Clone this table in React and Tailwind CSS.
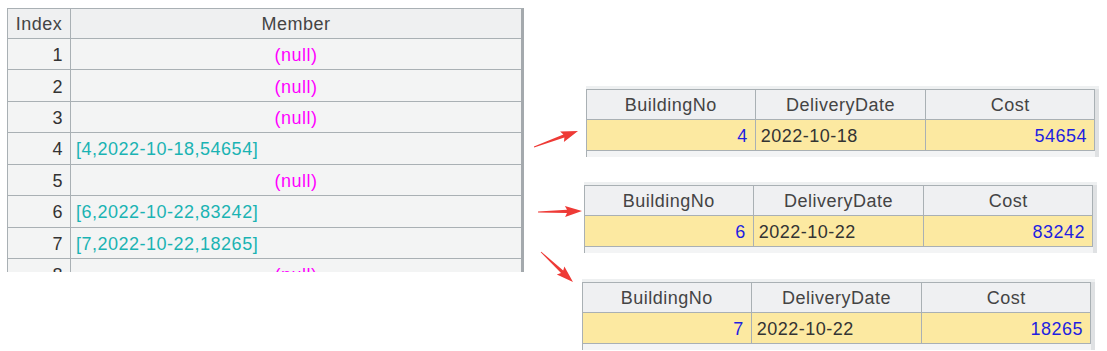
import React from "react";

const FONT = { fontFamily: '"Liberation Sans", Arial, sans-serif' };

const leftRows = [
  { i: 1, v: null },
  { i: 2, v: null },
  { i: 3, v: null },
  { i: 4, v: "[4,2022-10-18,54654]" },
  { i: 5, v: null },
  { i: 6, v: "[6,2022-10-22,83242]" },
  { i: 7, v: "[7,2022-10-22,18265]" },
  { i: 8, v: null },
];

const records = [
  { no: 4, date: "2022-10-18", cost: 54654, ml: "ml-[62px]", mt: "mt-[86px]" },
  { no: 6, date: "2022-10-22", cost: 83242, ml: "ml-[60px]", mt: "mt-[25px]" },
  { no: 7, date: "2022-10-22", cost: 18265, ml: "ml-[58px]", mt: "mt-[26px]" },
];

// tapered arrow polygon from tail to tip
function arrowPoints(tx, ty, hx, hy) {
  const dx = hx - tx;
  const dy = hy - ty;
  const len = Math.hypot(dx, dy);
  const ux = dx / len;
  const uy = dy / len;
  const nx = -uy;
  const ny = ux;
  const head = 15;
  const nkx = hx - ux * head;
  const nky = hy - uy * head;
  const bx = hx - ux * (head + 2);
  const by = hy - uy * (head + 2);
  const p = (x, y) => `${x.toFixed(1)},${y.toFixed(1)}`;
  return [
    p(tx + nx * 0.4, ty + ny * 0.4),
    p(nkx + nx * 1.6, nky + ny * 1.6),
    p(bx + nx * 5.5, by + ny * 5.5),
    p(hx, hy),
    p(bx - nx * 5.5, by - ny * 5.5),
    p(nkx - nx * 1.6, nky - ny * 1.6),
    p(tx - nx * 0.4, ty - ny * 0.4),
  ].join(" ");
}

function LeftTable() {
  return (
    <div className="pl-[7px] pt-[8px] shrink-0">
      <div className="w-[517px] h-[264px] overflow-hidden border-t border-l border-r-[3px] border-[#a9b0b4] border-r-[#a4a9ad] bg-[#f3f4f4]">
        <div className="flex h-[30px] bg-[#eff0f1] text-[#444]">
          <div className="w-[63px] flex items-center justify-center border-r border-b border-[#a9b0b4]">Index</div>
          <div className="flex-1 flex items-center justify-center border-b border-[#a9b0b4]">Member</div>
        </div>
        {leftRows.map((r) => (
          <div key={r.i} className="flex h-[31.43px]">
            <div className="w-[63px] flex items-center justify-end pr-[7px] pt-[2px] border-r border-b border-[#a9b0b4] text-[#333]">
              {r.i}
            </div>
            {r.v ? (
              <div className="flex-1 flex items-center pl-[5px] pt-[2px] border-b border-[#a9b0b4] text-[#1ab3b3]">{r.v}</div>
            ) : (
              <div className="flex-1 flex items-center justify-center pt-[2px] border-b border-[#a9b0b4] text-[#ff00ff]">(null)</div>
            )}
          </div>
        ))}
      </div>
    </div>
  );
}

function Record({ rec }) {
  return (
    <div className={`${rec.ml} ${rec.mt}`}>
      <div className="h-[3px] w-[513px] bg-[#eef0f1]" />
      <div className="flex w-[513px]">
        <div className="w-[509px] border-t border-l border-[#a9b0b4]">
          <div className="flex h-[30px] bg-[#eff0f2] text-[#444]">
            <div className="w-[169px] flex items-center justify-center border-r border-b border-[#a9b0b4]">BuildingNo</div>
            <div className="w-[171px] flex items-center justify-center border-r border-b border-[#a9b0b4]">DeliveryDate</div>
            <div className="w-[169px] flex items-center justify-center border-r border-b border-[#a9b0b4]">Cost</div>
          </div>
          <div className="flex h-[31px] bg-[#fce9a1]">
            <div className="w-[169px] flex items-center justify-end pr-[7px] pt-[2px] border-r border-b border-[#a9b0b4] text-[#1f1fe0]">
              {rec.no}
            </div>
            <div className="w-[171px] flex items-center pl-[5px] pt-[2px] border-r border-b border-[#a9b0b4] text-[#333]">
              {rec.date}
            </div>
            <div className="w-[169px] flex items-center justify-end pr-[7px] pt-[2px] border-r border-b border-[#a9b0b4] text-[#1f1fe0]">
              {rec.cost}
            </div>
          </div>
          <div className="h-[6px] bg-[#f3f4f5]" />
        </div>
        <div className="w-[4px] bg-[#dfe1e3]" />
      </div>
    </div>
  );
}

export default function App() {
  return (
    <div
      className="relative w-[1107px] h-[351px] overflow-hidden bg-white flex text-[18px] tracking-[0.5px] leading-none"
      style={FONT}
    >
      <LeftTable />
      <div className="flex flex-col">
        {records.map((rec) => (
          <Record key={rec.no} rec={rec} />
        ))}
      </div>
      <svg className="absolute inset-0 pointer-events-none" width="1107" height="351">
        <polygon points={arrowPoints(534, 147, 578, 131)} fill="#ee3a36" />
        <polygon points={arrowPoints(538, 212, 582, 211)} fill="#ee3a36" />
        <polygon points={arrowPoints(541, 252, 573, 282)} fill="#ee3a36" />
      </svg>
    </div>
  );
}
